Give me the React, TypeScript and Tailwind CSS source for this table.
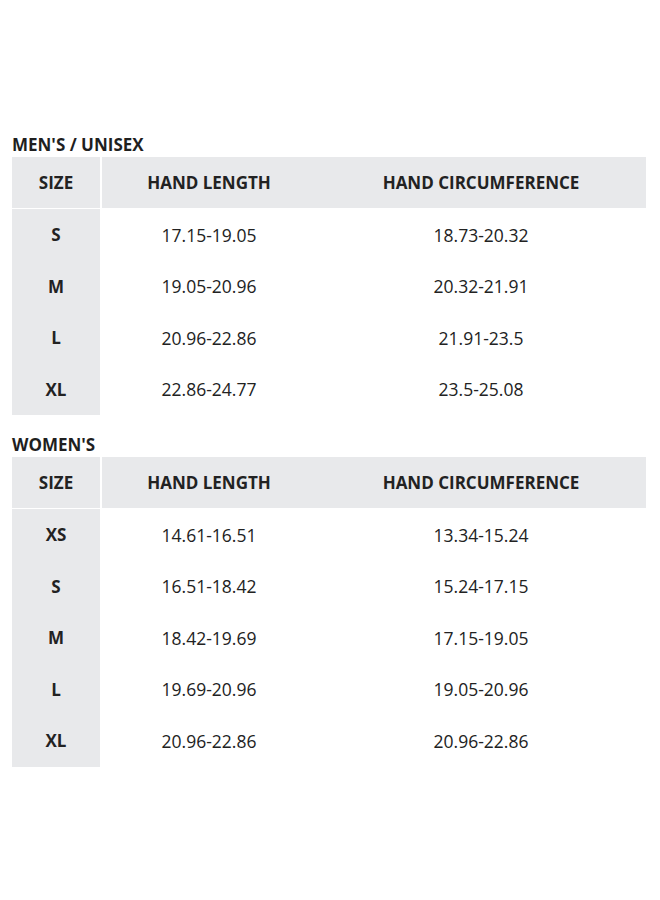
const men = [
  ['S', '17.15-19.05', '18.73-20.32'],
  ['M', '19.05-20.96', '20.32-21.91'],
  ['L', '20.96-22.86', '21.91-23.5'],
  ['XL', '22.86-24.77', '23.5-25.08'],
];

const women = [
  ['XS', '14.61-16.51', '13.34-15.24'],
  ['S', '16.51-18.42', '15.24-17.15'],
  ['M', '18.42-19.69', '17.15-19.05'],
  ['L', '19.69-20.96', '19.05-20.96'],
  ['XL', '20.96-22.86', '20.96-22.86'],
];

function SizeTable({ title, rows }: { title: string; rows: string[][] }) {
  return (
    <section>
      <h2 className="h-[24px] leading-[24px] text-[17px] font-bold text-[#1f1f1f]">{title}</h2>
      <div className="grid grid-cols-[88px_1fr] gap-x-[2px] text-[#222]">
        {/* HEADER */}
        <div className="h-[51px] bg-[#e8e9eb] flex items-center justify-center text-[17px] font-bold">SIZE</div>
        <div className="h-[51px] bg-[#e8e9eb] grid grid-cols-[214px_1fr] items-center text-[17px] font-bold">
          <span className="text-center">HAND LENGTH</span>
          <span className="text-center">HAND CIRCUMFERENCE</span>
        </div>
        <div className="col-span-2 h-[1px]" />

        {/* ROWS */}
        {rows.map(([size, len, circ]) => (
          <div key={size + len} className="contents">
            <div className="h-[51.5px] bg-[#e8e9eb] flex items-center justify-center text-[17px] font-bold">
              {size}
            </div>
            <div className="h-[51.5px] grid grid-cols-[214px_1fr] items-center text-[17.5px]">
              <span className="text-center">{len}</span>
              <span className="text-center">{circ}</span>
            </div>
          </div>
        ))}
      </div>
    </section>
  );
}

export default function App() {
  return (
    <div className="w-[660px] h-[900px] bg-white pl-[12px] pr-[14px] pt-[133px] font-['Open_Sans',sans-serif]">
      <SizeTable title="MEN'S / UNISEX" rows={men} />
      <div className="h-[18px]" />
      <SizeTable title="WOMEN'S" rows={women} />
    </div>
  );
}
